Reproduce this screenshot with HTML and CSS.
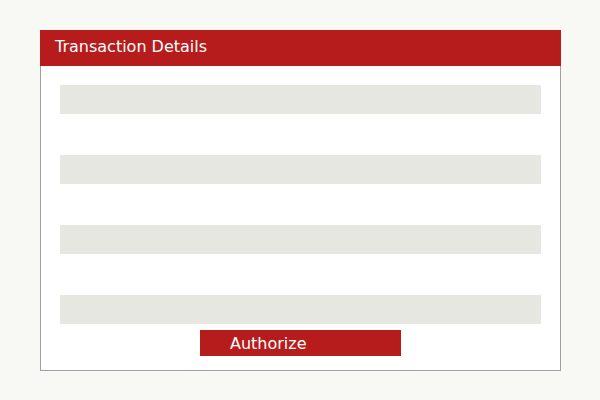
FILE: index.html
```html
<!DOCTYPE html>
<html lang="en">
<head>
  <meta charset="UTF-8" />
  <meta name="viewport" content="width=device-width, initial-scale=1.0"/>
  <title>Transaction Details</title>
  <link rel="stylesheet" href="styles.css">
</head>
<body>
  <div class="panel">
    <div class="panel-header">Transaction Details</div>
    <div class="panel-body">
      <div class="field"></div>
      <div class="field"></div>
      <div class="field"></div>
      <div class="field"></div>
      <button class="authorize-btn">Authorize</button>
    </div>
  </div>
</body>
</html>
```
FILE: styles.css
```css
body {
  margin: 0;
  background: #f8f8f4;
  font-family: 'DejaVu Sans', sans-serif;
}

.panel {
  width: 521px;
  margin: 30px 40px;
}

.panel-header {
  height: 36px;
  line-height: 34px;
  padding-left: 15px;
  background: #b71c1c;
  color: #fff;
  font-size: 16px;
}

.panel-body {
  box-sizing: border-box;
  height: 305px;
  padding-top: 19px;
  border: 1px solid #a0a0a0;
  border-top: none;
  background: #fff;
  display: flex;
  flex-direction: column;
}

.field {
  height: 29px;
  margin: 0 19px 41px;
  background: #e7e7e1;
}

.field:nth-of-type(4) {
  margin-bottom: 6px;
}

.authorize-btn {
  align-self: flex-start;
  margin-left: 159px;
  width: 201px;
  height: 26px;
  padding: 0 0 0 30px;
  border: none;
  background: #b71c1c;
  color: #fff;
  font-family: 'DejaVu Sans', sans-serif;
  font-size: 16px;
  text-align: left;
}
```
